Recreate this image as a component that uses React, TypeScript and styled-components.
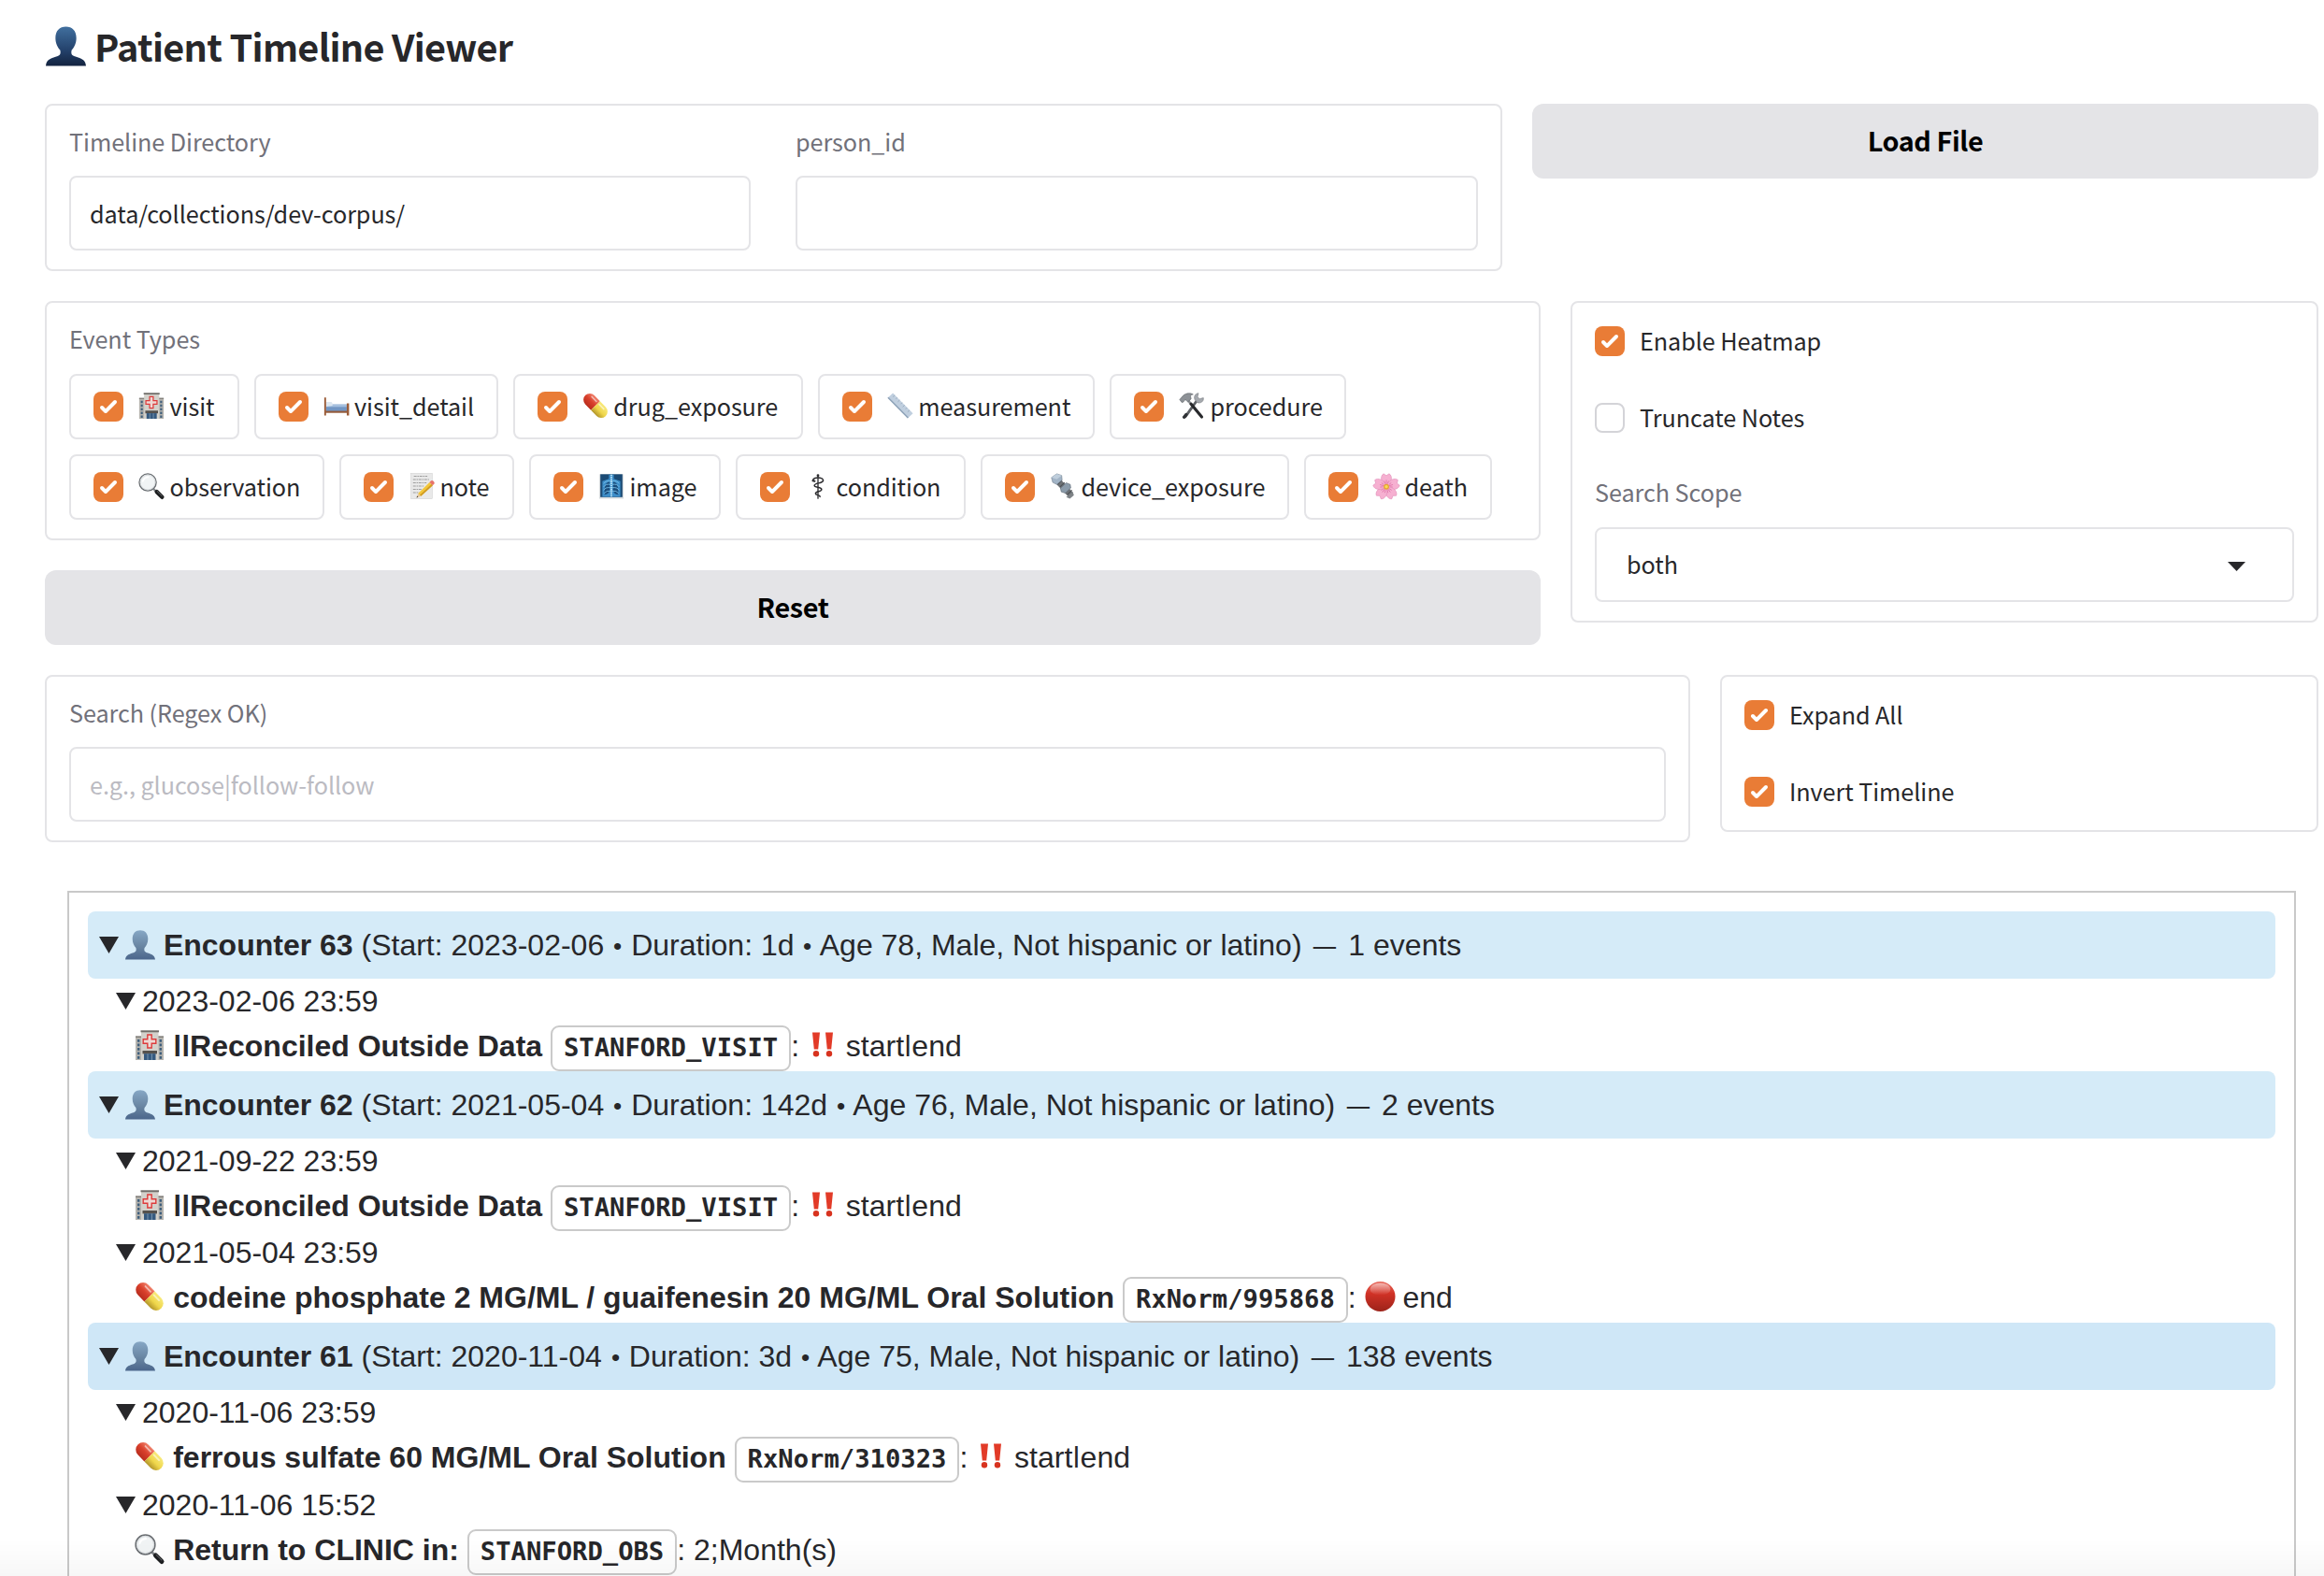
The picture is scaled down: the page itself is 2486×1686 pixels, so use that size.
import React from "react";
import styled, { createGlobalStyle } from "styled-components";

const sans = `"Noto Sans CJK SC", "Noto Sans", sans-serif`;
const helvetica = `"Liberation Sans", Arial, sans-serif`;
const mono = `"DejaVu Sans Mono", monospace`;

const GlobalStyle = createGlobalStyle`
  * { box-sizing: border-box; }
  html, body { margin: 0; background: #fff; }
  body { overflow: hidden; }
`;

/* ---------- icons ---------- */

type IconProps = { size?: number };

const Glyph = styled.svg<{ $size: number }>`
  display: block;
  flex: none;
  width: ${(p) => p.$size}px;
  height: ${(p) => p.$size}px;
  overflow: visible;
`;

const PersonIcon = ({ size = 32, soft = false }: IconProps & { soft?: boolean }) => {
  const id = soft ? "person-soft" : "person-dark";
  return (
    <Glyph $size={size} viewBox="0 0 32 32">
      <defs>
        <linearGradient id={id} x1="0" y1="0" x2="0" y2="1">
          <stop offset="0" stopColor={soft ? "#86a7c5" : "#41709f"} />
          <stop offset="0.6" stopColor={soft ? "#66829f" : "#24426c"} />
          <stop offset="1" stopColor={soft ? "#4b668c" : "#13233f"} />
        </linearGradient>
      </defs>
      <path
        fill={`url(#${id})`}
        d="M16 .3C21 .3 24.3 3.5 24.3 9.4C24.3 13.5 22.5 17 20.6 19C20 21.6 20.4 23 22.5 23.9C27 25.5 31.4 26 32 31.6H0C.6 26 5 25.5 9.5 23.9C11.6 23 12 21.6 11.4 19C9.5 17 7.7 13.5 7.7 9.4C7.7 3.5 11 .3 16 .3Z"
      />
    </Glyph>
  );
};

const HospitalIcon = ({ size = 32 }: IconProps) => (
  <Glyph $size={size} viewBox="0 0 32 32">
    <rect x="1" y="7" width="30" height="25" fill="#b5b3ae" />
    <rect x="1" y="6.4" width="30" height="1.4" fill="#77756f" />
    <rect x="7" y="1" width="18.5" height="31" fill="#d3d1cb" />
    <rect x="6.5" y=".3" width="19.5" height="2" fill="#6f6d69" />
    {[10, 14.5, 19, 23.5, 28].map((y) => (
      <React.Fragment key={y}>
        <rect x="3" y={y} width="2.4" height="2.8" fill="#3f5f7c" />
        <rect x="26.6" y={y} width="2.4" height="2.8" fill="#3f5f7c" />
      </React.Fragment>
    ))}
    <path
      d="M13.8 5H18.2V9.8H22.8V14.2H18.2V19H13.8V14.2H9.2V9.8H13.8Z"
      fill="#efd9d4"
      stroke="#dd3b3b"
      strokeWidth="1.4"
    />
    <rect x="8.5" y="22" width="15.5" height="3.4" fill="#55514d" />
    <rect x="10" y="25.2" width="12.5" height="6.8" fill="#35597f" />
    <path d="M14 25.4V32M18.4 25.4V32" stroke="#8ba6bb" strokeWidth=".8" />
  </Glyph>
);

const BedIcon = ({ size = 32 }: IconProps) => (
  <Glyph $size={size} viewBox="0 0 32 32">
    <rect x="3" y="14.5" width="25.5" height="9" fill="#7296c4" />
    <rect x="3" y="14.5" width="25.5" height="3" fill="#a5c0df" />
    <path d="M3 11.5H9.5Q11.5 12 11 16L3 17.2Z" fill="#dce6f0" />
    <rect x="2" y="22.4" width="27" height="2.4" fill="#935a3a" />
    <path d="M1 6H3.2V28H1ZM28.5 13H31.3V28H28.5Z" fill="#9b5c38" />
  </Glyph>
);

const PillIcon = ({ size = 32 }: IconProps) => (
  <Glyph $size={size} viewBox="0 0 32 32">
    <defs>
      <linearGradient id="pill-red" x1="0" y1="0" x2="0" y2="1">
        <stop offset="0" stopColor="#f0816b" />
        <stop offset=".5" stopColor="#d9402c" />
        <stop offset="1" stopColor="#b92d1e" />
      </linearGradient>
      <linearGradient id="pill-yellow" x1="0" y1="0" x2="0" y2="1">
        <stop offset="0" stopColor="#f8ea7c" />
        <stop offset=".55" stopColor="#efd64a" />
        <stop offset="1" stopColor="#b2952a" />
      </linearGradient>
    </defs>
    <g transform="rotate(46 16 16)">
      <path d="M16 8.2H6A7.8 7.8 0 0 0 6 23.8H16Z" fill="url(#pill-red)" />
      <path d="M16 8.2H26A7.8 7.8 0 0 1 26 23.8H16Z" fill="url(#pill-yellow)" />
      <path d="M5 11.6H13" stroke="#fff" strokeOpacity=".55" strokeWidth="1.8" strokeLinecap="round" />
      <path d="M18 11.6H26" stroke="#fff" strokeOpacity=".55" strokeWidth="1.8" strokeLinecap="round" />
    </g>
  </Glyph>
);

const RulerIcon = ({ size = 32 }: IconProps) => (
  <Glyph $size={size} viewBox="0 0 32 32">
    <path d="M7 .5L31.5 25.5L25 31.5L.5 6.5Z" fill="#c0cfdf" />
    <path d="M.5 6.5L25 31.5L26.2 30.4L1.7 5.4Z" fill="#8fa3b8" />
    <path
      d="M9.4 3L7 5.3M12.4 6L10.6 7.8M15.4 9.1L13 11.4M18.4 12.2L16.6 14M21.4 15.2L19 17.5M24.4 18.3L22.6 20.1M27.4 21.4L25 23.7"
      stroke="#93a5b8"
      strokeWidth=".9"
    />
  </Glyph>
);

const ToolsIcon = ({ size = 32 }: IconProps) => (
  <Glyph $size={size} viewBox="0 0 32 32">
    <path d="M21.5 10.5L8 29.5" stroke="#5f6266" strokeWidth="3.2" strokeLinecap="round" />
    <path d="M9 27L6.5 30" stroke="#303236" strokeWidth="4" strokeLinecap="round" />
    <path
      d="M19.5 8.5C18 4 20.5 1.2 24 .8L22.8 5.2L25.4 7.6L30 6.4C30.8 10.5 27 13.6 22.6 12.2Z"
      fill="#a5a9ae"
      stroke="#74787d"
      strokeWidth=".7"
    />
    <path d="M11.5 9.5L15 14.5" stroke="#8a8d91" strokeWidth="3" />
    <path d="M15 14L28 29.8" stroke="#28292c" strokeWidth="3.6" strokeLinecap="round" />
    <path
      d="M1 8.5L5.5 3.4C9.5 .2 14.5 .4 17.5 2.2C14.8 2.4 13.8 3.6 14.6 5.6L15 7.8L11 11.3L8.8 9.2C7.4 9 6.4 9.6 5.4 11.6L3.6 12Z"
      fill="#8d9196"
      stroke="#5b5f64"
      strokeWidth=".7"
    />
  </Glyph>
);

const MagnifierIcon = ({ size = 32 }: IconProps) => (
  <Glyph $size={size} viewBox="0 0 32 32">
    <path d="M18.5 19.5L22 23" stroke="#85898d" strokeWidth="2.6" />
    <path d="M22.5 23L29 29.5" stroke="#1d1e20" strokeWidth="5" strokeLinecap="round" />
    <path d="M23 22.3L29 28.2" stroke="#6f7276" strokeWidth="1" strokeLinecap="round" />
    <circle cx="11.5" cy="11.5" r="10.4" fill="#f1f4f5" stroke="#6a6e72" strokeWidth="1.5" />
    <circle cx="11.5" cy="11.5" r="9" fill="none" stroke="#cdd1d4" strokeWidth=".8" />
    <path d="M5.5 10Q7 5.4 12 5" stroke="#fff" strokeWidth="2" fill="none" strokeLinecap="round" />
  </Glyph>
);

const NoteIcon = ({ size = 32 }: IconProps) => (
  <Glyph $size={size} viewBox="0 0 32 32">
    <rect x="3" y=".5" width="26" height="31" fill="#e9e9e9" stroke="#cfcfcf" strokeWidth=".6" />
    <path
      d="M6.5 4H23M5.5 8H25M5.5 12H22M5.5 16H19M5.5 20H16M5.5 24H13"
      stroke="#9b9b9b"
      strokeWidth="1.1"
      strokeDasharray="3.4 .9 1.8 .8"
    />
    <path d="M25.6 11.4L29.6 15L15.2 28.4L11.6 25Z" fill="#f3c73b" />
    <path d="M28 13.6L29.6 15L15.2 28.4L13.6 27Z" fill="#cf9a24" />
    <path d="M25.6 11.4L27.6 9.4Q29 8.6 30.6 10Q32.4 11.6 31.4 13.2L29.6 15Z" fill="#e8746b" />
    <path d="M11.6 25L15.2 28.4L9.8 30.2Z" fill="#e6c79a" />
    <path d="M10.5 28L11.7 29.4L9.8 30.2Z" fill="#333" />
  </Glyph>
);

const XrayIcon = ({ size = 32 }: IconProps) => (
  <Glyph $size={size} viewBox="0 0 32 32">
    <rect x="1" y="1.5" width="30" height="30" fill="#d9dde0" />
    <rect x="2.5" y="1.5" width="27" height="28" fill="#1b4b75" />
    <path d="M13 2H19V7L27 10V29H5V10L13 7Z" fill="#3d8ec9" />
    <path d="M13.6 10.5C9 11 7.2 17 7.6 26.5C11 26.5 14 24 14 20ZM18.4 10.5C23 11 24.8 17 24.4 26.5C21 26.5 18 24 18 20Z" fill="#1a4d7c" />
    <path d="M16 2V29" stroke="#b5e0f7" strokeWidth="2.2" strokeDasharray="1.8 .7" />
    <path
      d="M15 10Q9 9 6.5 13M15 14Q9 13 6.5 17M15 18Q9 17 6.5 21M15 22Q10 21 7 25M17 10Q23 9 25.5 13M17 14Q23 13 25.5 17M17 18Q23 17 25.5 21M17 22Q22 21 25 25"
      fill="none"
      stroke="#79c0e8"
      strokeWidth="1"
    />
  </Glyph>
);

const StaffIcon = ({ size = 32 }: IconProps) => (
  <Glyph $size={size} viewBox="0 0 32 32">
    <g fill="none" stroke="#2c2c2f" strokeLinecap="round">
      <path d="M16 4V31" strokeWidth="1.5" />
      <path
        d="M10 9.5C9.4 6.5 14 5.2 18.5 6C23 6.8 23.6 10 20 11.4C16.6 12.8 11.6 12.6 11.6 15.4C11.6 18 20.4 17 20.4 20.2C20.4 23 13 22 13 25C13 27.4 18.8 26.6 18.4 29"
        strokeWidth="1.7"
      />
      <path d="M9.6 9.4L12 10" strokeWidth="2.2" />
    </g>
    <circle cx="16" cy="3" r="1.6" fill="#2c2c2f" />
  </Glyph>
);

const BoltIcon = ({ size = 32 }: IconProps) => (
  <Glyph $size={size} viewBox="0 0 32 32">
    <path d="M9 9L26 27" stroke="#6e7276" strokeWidth="7.5" />
    <path
      d="M9.5 14L15 8.6M12.5 17L18 11.7M15.5 20.2L21 15M18.5 23.4L24 18M21.5 26.5L27 21"
      stroke="#4d5155"
      strokeWidth="1.2"
    />
    <path d="M2 5.5L8.5 1L14.5 3L15 8.5L8.5 14L3.5 11.5Z" fill="#a2b4c6" stroke="#71808f" strokeWidth=".7" />
    <path d="M2 5.5L8.5 1L14.5 3L8.5 7.6Z" fill="#bfcedc" />
    <path d="M13 18.5L20 12L25 14L25.6 18.4L19 24.6L14 23Z" fill="#8b9baa" stroke="#5d6975" strokeWidth=".7" />
    <path d="M20 29.5L28 23L29.5 27L24.5 31.5Z" fill="#7e8387" />
  </Glyph>
);

const BlossomIcon = ({ size = 32 }: IconProps) => (
  <Glyph $size={size} viewBox="0 0 32 32">
    {[0, 72, 144, 216, 288].map((a) => (
      <g key={a} transform={`rotate(${a} 16 16.8)`}>
        <path
          d="M16 16.8C8.5 11.5 8.3 3.5 12.6 .9L16 3.2L19.4 .9C23.7 3.5 23.5 11.5 16 16.8Z"
          fill="#f6b0d1"
          stroke="#e28fb9"
          strokeWidth=".7"
        />
        <path d="M16 14V8.5M14.6 13L13.2 9.6M17.4 13L18.8 9.6" stroke="#dd6ba2" strokeWidth=".8" />
      </g>
    ))}
    <circle cx="16" cy="16.8" r="3.4" fill="#e7a13a" />
    <circle cx="16" cy="16.8" r="1.9" fill="#f7dd55" />
  </Glyph>
);

const BangIcon = ({ size = 32 }: IconProps) => (
  <Glyph $size={size} viewBox="0 0 32 32">
    <path d="M5 2.5H13L11.2 20.5H6.8ZM19 2.5H27L25.2 20.5H20.8Z" fill="#e23b28" />
    <circle cx="9" cy="25.3" r="3.2" fill="#d8331f" />
    <circle cx="23" cy="25.3" r="3.2" fill="#d8331f" />
  </Glyph>
);

const RedCircleIcon = ({ size = 32 }: IconProps) => (
  <Glyph $size={size} viewBox="0 0 32 32">
    <defs>
      <linearGradient id="red-ball" x1="0" y1="0" x2="0" y2="1">
        <stop offset="0" stopColor="#e8675a" />
        <stop offset=".4" stopColor="#d13226" />
        <stop offset="1" stopColor="#9c231a" />
      </linearGradient>
      <linearGradient id="red-shine" x1="0" y1="0" x2="0" y2="1">
        <stop offset="0" stopColor="#fff" stopOpacity=".55" />
        <stop offset="1" stopColor="#fff" stopOpacity="0" />
      </linearGradient>
    </defs>
    <circle cx="16.5" cy="16" r="16" fill="url(#red-ball)" />
    <ellipse cx="16.5" cy="8" rx="11" ry="6.6" fill="url(#red-shine)" />
  </Glyph>
);

/* ---------- page parts ---------- */

const Page = styled.main`
  width: 2486px;
  height: 1686px;
  overflow: hidden;
  padding: 0 6px 0 48px;
  font-family: ${sans};
  letter-spacing: -0.06px;
  color: #27272a;
  background: #fff;
`;

const Title = styled.h1`
  display: flex;
  align-items: center;
  gap: 9px;
  height: 111px;
  padding: 0 0 13px 1px;
  margin: 0;
  font-size: 39.6px;
  font-weight: 700;
  line-height: 98px;
  letter-spacing: -0.7px;
`;

const TitleText = styled.span`
  margin-top: -1px;
`;

const Stack = styled.div`
  display: flex;
  flex-direction: column;
  gap: 32px;
`;

const Row = styled.div<{ $columns: string }>`
  display: grid;
  grid-template-columns: ${(p) => p.$columns};
  column-gap: 32px;
  align-items: start;
`;

const Panel = styled.section<{ $height?: number; $flush?: boolean }>`
  border: 2px solid #e4e4e7;
  border-radius: 8px;
  padding: ${(p) => (p.$flush ? "25px" : "24px")} 24px 20px;
  ${(p) => p.$height && `height: ${p.$height}px;`}
`;

const Fields = styled.div`
  display: grid;
  grid-template-columns: 729px 1fr;
  gap: 48px;
`;

const Field = styled.label`
  display: block;
`;

const FieldLabel = styled.div<{ $height?: number }>`
  height: ${(p) => p.$height ?? 51}px;
  font-size: 25.2px;
  line-height: 28px;
  color: #71717a;
`;

const Input = styled.input`
  display: block;
  width: 100%;
  height: 80px;
  padding: 0 20px;
  border: 2px solid #e4e4e7;
  border-radius: 8px;
  outline: none;
  font-family: inherit;
  font-size: 25.2px;
  letter-spacing: -0.06px;
  color: #27272a;
  background: #fff;
  &::placeholder {
    color: #bbbbc2;
    opacity: 1;
  }
`;

const Button = styled.button`
  height: 80px;
  width: 100%;
  padding: 0 0 4px;
  border: 0;
  border-radius: 12px;
  background: #e4e4e7;
  color: #000;
  font-family: inherit;
  font-size: 28.8px;
  font-weight: 700;
  letter-spacing: -0.4px;
`;

const Chips = styled.div`
  display: flex;
  flex-wrap: wrap;
  gap: 16px;
`;

const Chip = styled.label<{ $width: number }>`
  display: flex;
  align-items: center;
  width: ${(p) => p.$width}px;
  height: 70px;
  padding: 0 0 0 24px;
  border: 2px solid #e4e4e7;
  border-radius: 8px;
  white-space: nowrap;
`;

const ChipIcon = styled.span`
  margin: 0 5.5px 2px 16px;
`;

const OptionText = styled.span<{ $inset?: number }>`
  margin-left: ${(p) => p.$inset ?? 0}px;
  margin-top: -3px;
  font-size: 25.2px;
  line-height: 28px;
`;

const Box = styled.span<{ $on: boolean }>`
  display: flex;
  align-items: center;
  justify-content: center;
  flex: none;
  width: 32px;
  height: 32px;
  border-radius: 8px;
  border: ${(p) => (p.$on ? "0" : "2px solid #d4d4d8")};
  background: ${(p) => (p.$on ? "#e97c36" : "#fff")};
`;

const Options = styled.div`
  display: flex;
  flex-direction: column;
  gap: 50px;
`;

const Option = styled.label`
  display: flex;
  align-items: center;
  height: 32px;
`;

const ScopeField = styled.div`
  margin-top: 49px;
`;

const Select = styled.div`
  display: flex;
  align-items: center;
  justify-content: space-between;
  height: 80px;
  padding: 0 50px 0 32px;
  border: 2px solid #e4e4e7;
  border-radius: 8px;
  font-size: 25.2px;
`;

const SelectValue = styled.span`
  margin-top: -2px;
`;

const Caret = styled.svg`
  width: 19px;
  height: 10px;
  margin-top: 3px;
`;

const Timeline = styled.div`
  margin: 52px 24px 0;
  height: 800px;
  padding: 20px;
  border: 2px solid #c9c9c9;
  font-family: ${helvetica};
  font-size: 32px;
  letter-spacing: 0;
  white-space: pre;
`;

const EncounterBar = styled.div<{ $tone: string }>`
  display: flex;
  align-items: center;
  height: 72px;
  padding-left: 12px;
  border-radius: 8px;
  background: ${(p) => p.$tone};
  line-height: 72px;
`;

const Disclosure = styled.svg`
  width: 21px;
  height: 18px;
  margin-right: 7px;
`;

const TimeRow = styled.div`
  display: flex;
  align-items: center;
  height: 48px;
  padding-left: 30px;
  line-height: 48px;
`;

const EventRow = styled.div`
  display: flex;
  align-items: flex-start;
  height: 50.7px;
  padding-left: 50.3px;
  line-height: 48px;
`;

const EventIcon = styled.span`
  margin: 7px 0 0;
`;

const Tag = styled.code`
  height: 49px;
  margin-top: 2px;
  padding: 0 12px;
  border: 2px solid #cacaca;
  border-radius: 9px;
  font-family: ${mono};
  font-size: 27.2px;
  font-weight: 700;
  line-height: 43px;
  background: #fff;
`;

/* Pipe trimmed to cap height so it sits on the baseline. */
const Pipe = styled.span`
  display: inline-block;
  line-height: 37px;
  transform: scaleY(0.77);
  transform-origin: 0 6px;
`;

/* Separators drawn a little smaller than the text around them. */
const Separator = styled.span<{ $scale: string }>`
  display: inline-block;
  line-height: 37px;
  transform: scale(${(p) => p.$scale});
  transform-origin: 50% 56%;
`;

const BottomShade = styled.div`
  position: fixed;
  left: 0;
  right: 0;
  bottom: 0;
  height: 40px;
  background: linear-gradient(rgba(0, 0, 0, 0), rgba(0, 0, 0, 0.03));
  pointer-events: none;
`;

/* ---------- pieces ---------- */

const Check = ({ on = true }: { on?: boolean }) => (
  <Box $on={on}>
    {on && (
      <svg viewBox="0 0 16 16" width="32" height="32" fill="#fff">
        <path d="M12.207 4.793a1 1 0 010 1.414l-5 5a1 1 0 01-1.414 0l-2-2a1 1 0 011.414-1.414L6.5 9.086l4.293-4.293a1 1 0 011.414 0z" />
      </svg>
    )}
  </Box>
);

const Labeled = ({ on, children }: { on?: boolean; children: React.ReactNode }) => (
  <Option>
    <Check on={on} />
    <OptionText $inset={16}>{children}</OptionText>
  </Option>
);

const Triangle = () => (
  <Disclosure viewBox="0 0 21 18">
    <path d="M0 0H21L10.5 18Z" fill="#27272a" />
  </Disclosure>
);

const withPipes = (text: string) =>
  text.split(/(\|)/).map((part, i) => (part === "|" ? <Pipe key={i}>|</Pipe> : part));

const withSeparators = (text: string) =>
  text.split(/([•—])/).map((part, i) => {
    if (part === "•") return <Separator key={i} $scale="0.82">•</Separator>;
    if (part === "—") return <Separator key={i} $scale="0.76, 1">—</Separator>;
    return part;
  });

const eventTypes = [
  { name: "visit", Icon: HospitalIcon, width: 181.5 },
  { name: "visit_detail", Icon: BedIcon, width: 261.3 },
  { name: "drug_exposure", Icon: PillIcon, width: 310 },
  { name: "measurement", Icon: RulerIcon, width: 296.2 },
  { name: "procedure", Icon: ToolsIcon, width: 253.5 },
  { name: "observation", Icon: MagnifierIcon, width: 273 },
  { name: "note", Icon: NoteIcon, width: 187 },
  { name: "image", Icon: XrayIcon, width: 205 },
  { name: "condition", Icon: StaffIcon, width: 246 },
  { name: "device_exposure", Icon: BoltIcon, width: 330 },
  { name: "death", Icon: BlossomIcon, width: 201 },
];

type Entry = {
  time: string;
  Icon: React.FC<IconProps>;
  name: string;
  code: string;
  Mark?: React.FC<IconProps>;
  value: string;
};

const encounters: { title: string; detail: string; tone: string; entries: Entry[] }[] = [
  {
    title: "Encounter 63",
    detail: " (Start: 2023-02-06 • Duration: 1d • Age 78, Male, Not hispanic or latino) — 1 events",
    tone: "#d5ebf8",
    entries: [
      { time: "2023-02-06 23:59", Icon: HospitalIcon, name: "||Reconciled Outside Data", code: "STANFORD_VISIT", Mark: BangIcon, value: "start|end" },
    ],
  },
  {
    title: "Encounter 62",
    detail: " (Start: 2021-05-04 • Duration: 142d • Age 76, Male, Not hispanic or latino) — 2 events",
    tone: "#d5ebf8",
    entries: [
      { time: "2021-09-22 23:59", Icon: HospitalIcon, name: "||Reconciled Outside Data", code: "STANFORD_VISIT", Mark: BangIcon, value: "start|end" },
      { time: "2021-05-04 23:59", Icon: PillIcon, name: "codeine phosphate 2 MG/ML / guaifenesin 20 MG/ML Oral Solution", code: "RxNorm/995868", Mark: RedCircleIcon, value: "end" },
    ],
  },
  {
    title: "Encounter 61",
    detail: " (Start: 2020-11-04 • Duration: 3d • Age 75, Male, Not hispanic or latino) — 138 events",
    tone: "#cfe7f7",
    entries: [
      { time: "2020-11-06 23:59", Icon: PillIcon, name: "ferrous sulfate 60 MG/ML Oral Solution", code: "RxNorm/310323", Mark: BangIcon, value: "start|end" },
      { time: "2020-11-06 15:52", Icon: MagnifierIcon, name: "Return to CLINIC in:", code: "STANFORD_OBS", value: "2;Month(s)" },
    ],
  },
];

export default function App() {
  return (
    <>
      <GlobalStyle />
      <Page>
        <Title>
          <PersonIcon size={43} />
          <TitleText>Patient Timeline Viewer</TitleText>
        </Title>
        <Stack>
          <Row $columns="1559px 841px">
            <Panel $height={179}>
              <Fields>
                <Field>
                  <FieldLabel>Timeline Directory</FieldLabel>
                  <Input defaultValue="data/collections/dev-corpus/" />
                </Field>
                <Field>
                  <FieldLabel>person_id</FieldLabel>
                  <Input />
                </Field>
              </Fields>
            </Panel>
            <Button>Load File</Button>
          </Row>

          <Row $columns="1600px 800px">
            <Stack>
              <Panel $height={256}>
                <FieldLabel $height={52}>Event Types</FieldLabel>
                <Chips>
                  {eventTypes.map(({ name, Icon, width }) => (
                    <Chip key={name} $width={width}>
                      <Check />
                      <ChipIcon>
                        <Icon size={28} />
                      </ChipIcon>
                      <OptionText>{name}</OptionText>
                    </Chip>
                  ))}
                </Chips>
              </Panel>
              <Button>Reset</Button>
            </Stack>
            <Panel $height={344} $flush>
              <Options>
                <Labeled>Enable Heatmap</Labeled>
                <Labeled on={false}>Truncate Notes</Labeled>
              </Options>
              <ScopeField>
                <FieldLabel $height={52}>Search Scope</FieldLabel>
                <Select>
                  <SelectValue>both</SelectValue>
                  <Caret viewBox="0 0 19 10">
                    <path d="M0 0H19L9.5 10Z" fill="#27272a" />
                  </Caret>
                </Select>
              </ScopeField>
            </Panel>
          </Row>

          <Row $columns="1760px 640px">
            <Panel $height={179}>
              <Field>
                <FieldLabel>Search (Regex OK)</FieldLabel>
                <Input placeholder="e.g., glucose|follow-follow" />
              </Field>
            </Panel>
            <Panel $height={168} $flush>
              <Options>
                <Labeled>Expand All</Labeled>
                <Labeled>Invert Timeline</Labeled>
              </Options>
            </Panel>
          </Row>
        </Stack>

        <Timeline>
          {encounters.map((enc) => (
            <section key={enc.title}>
              <EncounterBar $tone={enc.tone}>
                <Triangle />
                <PersonIcon soft />
                <span>
                  {" "}
                  <b>{enc.title}</b>
                  {withSeparators(enc.detail)}
                </span>
              </EncounterBar>
              {enc.entries.map(({ time, Icon, name, code, Mark, value }) => (
                <React.Fragment key={time}>
                  <TimeRow>
                    <Triangle />
                    <span>{time}</span>
                  </TimeRow>
                  <EventRow>
                    <EventIcon>
                      <Icon size={32} />
                    </EventIcon>
                    <b> {withPipes(name)} </b>
                    <Tag>{code}</Tag>
                    <span>: </span>
                    {Mark && (
                      <EventIcon>
                        <Mark size={32} />
                      </EventIcon>
                    )}
                    <span>
                      {Mark ? " " : ""}
                      {withPipes(value)}
                    </span>
                  </EventRow>
                </React.Fragment>
              ))}
            </section>
          ))}
        </Timeline>
      </Page>
      <BottomShade />
    </>
  );
}
